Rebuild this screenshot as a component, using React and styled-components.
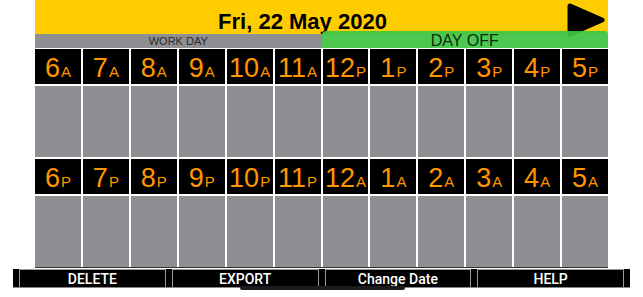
import React from 'react';
import styled, { createGlobalStyle } from 'styled-components';

const GlobalStyle = createGlobalStyle`
  body {
    margin: 0;
    background: #fff;
    font-family: "Liberation Sans", Arial, sans-serif;
  }
`

const Page = styled.div`
  width: 643px;
  height: 297px;
  position: relative;
  overflow: hidden;
`

const Sheet = styled.div`
  width: 573px;
  margin: 0 auto;
`

const Header = styled.div`
  height: 34px;
  background: #ffcc00;
  display: flex;
  align-items: center;
`

const Title = styled.div`
  flex: 1;
  text-align: center;
  font-weight: bold;
  font-size: 22px;
  color: #000;
  padding-top: 9px;
  padding-left: 4px;
`

const PlayButton = styled.div`
  width: 40px;
  height: 34px;
  margin-right: 2px;
  align-self: flex-start;
  padding-top: 3px;
  svg { display: block; }
`

const Labels = styled.div`
  height: 14px;
  display: flex;
`

const DayLabel = styled.div`
  flex: 1;
  position: relative;
  display: flex;
  justify-content: center;
  align-items: center;
  background: ${p => p.off ? 'rgba(62, 196, 68, 0.93)' : '#8e8e93'};
  color: ${p => p.off ? '#0c2a0c' : '#2a2a2a'};
  font-size: ${p => p.off ? '16px' : '11px'};
  line-height: ${p => p.off ? '17px' : '14px'};
  ${p => p.off && `
    margin-top: -3px;
    padding-top: 2px;
    border-radius: 4px 4px 0 0;
  `}
`

const Grid = styled.div`
  display: grid;
  grid-template-columns: repeat(12, 1fr);
  grid-template-rows: 35px 71px 35px 71px;
  gap: 2px;
  padding-top: 1px;
  background: #fff;
  border-bottom: 1px solid #333;
`

const HourCell = styled.div`
  background: #000;
  color: #ff9500;
  display: flex;
  justify-content: center;
  align-items: baseline;
  padding-top: 4px;
  line-height: 30px;
`

const HourNum = styled.span`
  font-size: 27px;
`

const HourSuffix = styled.span`
  font-size: 15px;
  margin-left: 1px;
`

const SlotCell = styled.div`
  background: #8e8e93;
`

const ButtonBar = styled.div`
  width: 617px;
  height: 19px;
  margin: 1px auto 0;
  background: #000;
  display: flex;
  gap: 6px;
  padding: 0 6px;
  box-sizing: border-box;
  border-bottom: 1px solid #888;
`

const BarButton = styled.div`
  flex: 1;
  border: 1px solid #9a9a9a;
  border-bottom: none;
  color: #fff;
  font-family: Roboto, "Liberation Sans", sans-serif;
  font-size: 14px;
  font-weight: 500;
  line-height: 16px;
  display: flex;
  align-items: center;
  justify-content: center;
`

const HomeIndicator = styled.div`
  position: absolute;
  left: 240px;
  top: 286px;
  width: 165px;
  height: 4px;
  border-radius: 2px;
  background: #1c1c1e;
`

const topHours = ['6A', '7A', '8A', '9A', '10A', '11A', '12P', '1P', '2P', '3P', '4P', '5P'];
const bottomHours = ['6P', '7P', '8P', '9P', '10P', '11P', '12A', '1A', '2A', '3A', '4A', '5A'];

const Hour = ({ label }) => (
  <HourCell>
    <HourNum>{label.slice(0, -1)}</HourNum>
    <HourSuffix>{label.slice(-1)}</HourSuffix>
  </HourCell>
)

const App = () => {
  return (
    <Page>
      <GlobalStyle />
      <Sheet>
        <Header>
          <Title>Fri, 22 May 2020</Title>
          <PlayButton>
            <svg width="40" height="34" viewBox="0 0 40 34">
              <path d="M4 3 L36 17 L4 31 Z" fill="#000" stroke="#000" strokeWidth="5" strokeLinejoin="round" />
            </svg>
          </PlayButton>
        </Header>
        <Labels>
          <DayLabel>WORK DAY</DayLabel>
          <DayLabel off>DAY OFF</DayLabel>
        </Labels>
        <Grid>
          {topHours.map(h => <Hour key={h} label={h} />)}
          {topHours.map(h => <SlotCell key={'s' + h} />)}
          {bottomHours.map(h => <Hour key={h} label={h} />)}
          {bottomHours.map(h => <SlotCell key={'s' + h} />)}
        </Grid>
      </Sheet>
      <ButtonBar>
        <BarButton>DELETE</BarButton>
        <BarButton>EXPORT</BarButton>
        <BarButton>Change Date</BarButton>
        <BarButton>HELP</BarButton>
      </ButtonBar>
      <HomeIndicator />
    </Page>
  )
}

export default App;
